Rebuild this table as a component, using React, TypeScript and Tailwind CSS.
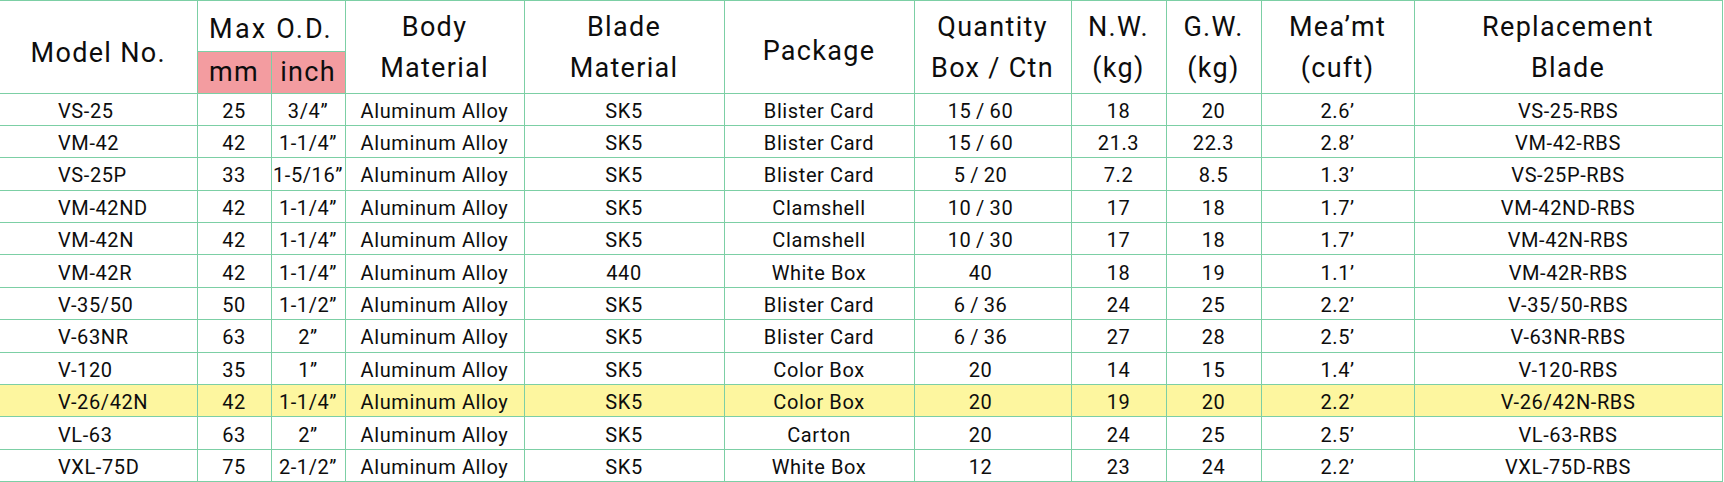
import React from 'react';

type Row = {
  model: string;
  mm: string;
  inch: string;
  blade: string;
  pack: string;
  qty: string;
  nw: string;
  gw: string;
  meas: string;
  repl: string;
  hot?: boolean;
};

const rows: Row[] = [
  { model: 'VS-25', mm: '25', inch: '3/4\u201D', blade: 'SK5', pack: 'Blister Card', qty: '15\u2009/\u200960', nw: '18', gw: '20', meas: '2.6\u2019', repl: 'VS-25-RBS' },
  { model: 'VM-42', mm: '42', inch: '1-1/4\u201D', blade: 'SK5', pack: 'Blister Card', qty: '15\u2009/\u200960', nw: '21.3', gw: '22.3', meas: '2.8\u2019', repl: 'VM-42-RBS' },
  { model: 'VS-25P', mm: '33', inch: '1-5/16\u201D', blade: 'SK5', pack: 'Blister Card', qty: '5\u2009/\u200920', nw: '7.2', gw: '8.5', meas: '1.3\u2019', repl: 'VS-25P-RBS' },
  { model: 'VM-42ND', mm: '42', inch: '1-1/4\u201D', blade: 'SK5', pack: 'Clamshell', qty: '10\u2009/\u200930', nw: '17', gw: '18', meas: '1.7\u2019', repl: 'VM-42ND-RBS' },
  { model: 'VM-42N', mm: '42', inch: '1-1/4\u201D', blade: 'SK5', pack: 'Clamshell', qty: '10\u2009/\u200930', nw: '17', gw: '18', meas: '1.7\u2019', repl: 'VM-42N-RBS' },
  { model: 'VM-42R', mm: '42', inch: '1-1/4\u201D', blade: '440', pack: 'White Box', qty: '40', nw: '18', gw: '19', meas: '1.1\u2019', repl: 'VM-42R-RBS' },
  { model: 'V-35/50', mm: '50', inch: '1-1/2\u201D', blade: 'SK5', pack: 'Blister Card', qty: '6\u2009/\u200936', nw: '24', gw: '25', meas: '2.2\u2019', repl: 'V-35/50-RBS' },
  { model: 'V-63NR', mm: '63', inch: '2\u201D', blade: 'SK5', pack: 'Blister Card', qty: '6\u2009/\u200936', nw: '27', gw: '28', meas: '2.5\u2019', repl: 'V-63NR-RBS' },
  { model: 'V-120', mm: '35', inch: '1\u201D', blade: 'SK5', pack: 'Color Box', qty: '20', nw: '14', gw: '15', meas: '1.4\u2019', repl: 'V-120-RBS' },
  { model: 'V-26/42N', mm: '42', inch: '1-1/4\u201D', blade: 'SK5', pack: 'Color Box', qty: '20', nw: '19', gw: '20', meas: '2.2\u2019', repl: 'V-26/42N-RBS', hot: true },
  { model: 'VL-63', mm: '63', inch: '2\u201D', blade: 'SK5', pack: 'Carton', qty: '20', nw: '24', gw: '25', meas: '2.5\u2019', repl: 'VL-63-RBS' },
  { model: 'VXL-75D', mm: '75', inch: '2-1/2\u201D', blade: 'SK5', pack: 'White Box', qty: '12', nw: '23', gw: '24', meas: '2.2\u2019', repl: 'VXL-75D-RBS' },
];

// header cell spanning both header rows, two lines of text
const th2 = 'border border-[#7ccfa5] align-top pt-[6px] leading-[41px] font-normal';
const td = 'border border-[#7ccfa5] h-[32.4px] p-0 pt-[3px] text-center leading-none';

export default function App() {
  return (
    <div className="bg-white w-[1724px] h-[482px] overflow-hidden text-[#0d0d0d] font-['Roboto',sans-serif]">
      <table className="border-collapse table-fixed w-[1722px]">
        <colgroup>
          <col className="w-[197px]" />
          <col className="w-[74px]" />
          <col className="w-[74px]" />
          <col className="w-[179px]" />
          <col className="w-[200px]" />
          <col className="w-[190px]" />
          <col className="w-[157px]" />
          <col className="w-[95px]" />
          <col className="w-[95px]" />
          <col className="w-[153px]" />
          <col className="w-[308px]" />
        </colgroup>
        <thead className="text-[27px] tracking-[1.3px]">
          <tr className="h-[51px]">
            <th rowSpan={2} className="border border-l-0 border-[#7ccfa5] font-normal pt-[12px]">Model No.</th>
            <th colSpan={2} className="border border-[#7ccfa5] font-normal pt-[6px] tracking-[2.2px]">Max O.D.</th>
            <th rowSpan={2} className={th2}>Body<br />Material</th>
            <th rowSpan={2} className={th2}>Blade<br />Material</th>
            <th rowSpan={2} className="border border-[#7ccfa5] font-normal pt-[8px]">Package</th>
            <th rowSpan={2} className={th2}>Quantity<br />Box / Ctn</th>
            <th rowSpan={2} className={th2}>N.W.<br />(kg)</th>
            <th rowSpan={2} className={th2}>G.W.<br />(kg)</th>
            <th rowSpan={2} className={th2}>Mea’mt<br />(cuft)</th>
            <th rowSpan={2} className={th2}>Replacement<br />Blade</th>
          </tr>
          <tr className="h-[41px]">
            <th className="border border-[#7ccfa5] bg-[#f39ca0] font-normal">mm</th>
            <th className="border border-[#7ccfa5] bg-[#f39ca0] font-normal">inch</th>
          </tr>
        </thead>
        <tbody className="text-[20px] tracking-[0.6px]">
          {rows.map((r) => (
            <tr key={r.model} className={r.hot ? 'bg-[#fdf69f]' : ''}>
              <td className={`${td} border-l-0 !text-left pl-[58px]`}>{r.model}</td>
              <td className={td}>{r.mm}</td>
              <td className={td}>{r.inch}</td>
              <td className={td}>Aluminum Alloy</td>
              <td className={td}>{r.blade}</td>
              <td className={td}>{r.pack}</td>
              <td className={`${td} pr-[24px]`}>{r.qty}</td>
              <td className={td}>{r.nw}</td>
              <td className={td}>{r.gw}</td>
              <td className={td}>{r.meas}</td>
              <td className={td}>{r.repl}</td>
            </tr>
          ))}
        </tbody>
      </table>
    </div>
  );
}
